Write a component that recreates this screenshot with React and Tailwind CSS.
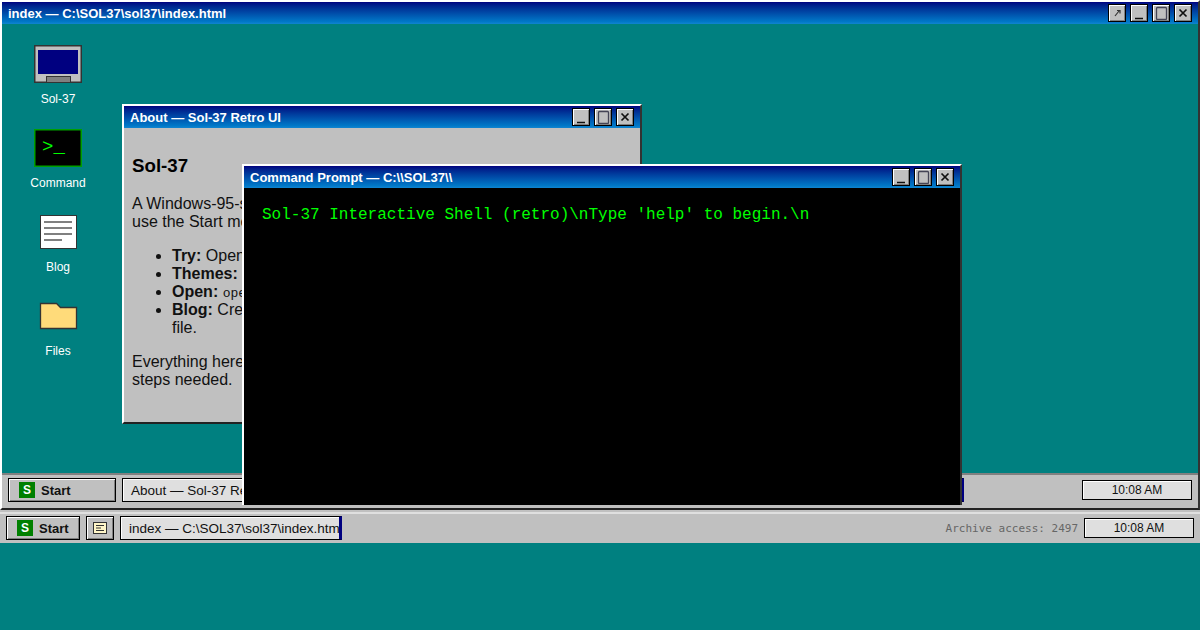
const WinButton = ({ kind }) => (
  <button className="w-[18px] h-[18px] border border-black bg-[#c0c0c0] flex items-center justify-center [box-shadow:inset_1px_1px_0_#fff,inset_-1px_-1px_0_#808080]">
    <svg width="14" height="14" viewBox="0 0 14 14" fill="none">
      {kind === "min" && <path d="M3 12.5h8" stroke="#111" strokeWidth="1.5" />}
      {kind === "max" && <rect x="2.5" y="1.5" width="10" height="12" stroke="#445" strokeWidth="1.3" rx="1" />}
      {kind === "close" && <path d="M3.5 3.5l7 7M10.5 3.5l-7 7" stroke="#111" strokeWidth="1.7" />}
      {kind === "pop" && <path d="M5 10l4-5M7 4.5h3v3" stroke="#333" strokeWidth="1.2" />}
    </svg>
  </button>
);

const TitleBar = ({ title, pop }) => (
  <div className="h-[22px] flex items-center justify-between pl-[6px] pr-[6px] bg-gradient-to-b from-[#000080] to-[#1084d0] shrink-0">
    <span className="text-white font-bold text-[13px] leading-none">{title}</span>
    <div className="flex gap-1">
      {pop && <WinButton kind="pop" />}
      <WinButton kind="min" />
      <WinButton kind="max" />
      <WinButton kind="close" />
    </div>
  </div>
);

const Window = ({ title, className, children }) => (
  <div className={`absolute flex flex-col border-2 border-white border-r-[#333] border-b-[#222] bg-[#c0c0c0] ${className}`}>
    <TitleBar title={title} />
    {children}
  </div>
);

const DesktopIcon = ({ label, children }) => (
  <div className="h-[84px] w-[90px] flex flex-col items-center">
    {children}
    <span className="mt-[3px] text-white text-xs leading-4">{label}</span>
  </div>
);

const StartButton = ({ className }) => (
  <button className={`h-6 flex items-center gap-[6px] pl-[10px] border border-black bg-[#c0c0c0] text-[13px] font-bold text-[#111] [box-shadow:inset_1px_1px_0_#fff,inset_-1px_-1px_0_#808080] ${className}`}>
    <span className="w-4 h-4 bg-[#008000] text-white text-xs flex items-center justify-center">S</span>
    <span className="pt-px">Start</span>
  </button>
);

const TaskItem = ({ children, className }) => (
  <div className={`h-6 flex items-center pl-2 pt-[2px] overflow-hidden whitespace-nowrap bg-[#dfdfdf] border border-black border-r-[3px] border-r-[#000080] text-[13.5px] text-[#111] [box-shadow:inset_1px_1px_0_#fff] ${className}`}>
    {children}
  </div>
);

const Clock = () => (
  <div className="w-[110px] h-5 flex items-center justify-center bg-[#dfdfdf] border border-black text-xs text-[#111] [box-shadow:inset_1px_1px_0_#fff]">
    10:08 AM
  </div>
);

export default function App() {
  return (
    <div className="w-[1200px] h-[630px] overflow-hidden bg-[#008080] font-['Liberation_Sans',Arial,sans-serif] flex flex-col">
      <div className="relative h-[510px] shrink-0 flex flex-col border-2 border-white border-r-[#333] border-b-[#222]">
        <TitleBar title="index — C:\SOL37\sol37\index.html" pop />
        <div className="flex-1 pt-4 pl-[11px]">
          <DesktopIcon label="Sol-37">
            <svg width="48" height="48" viewBox="0 0 48 48">
              <rect x="0.75" y="5.75" width="46.5" height="36.5" fill="#c0c0c0" stroke="#333" strokeWidth="1.5" />
              <rect x="4" y="10" width="40" height="24" fill="#000080" />
              <rect x="12.5" y="36.5" width="24" height="6" fill="#808080" stroke="#333" />
            </svg>
          </DesktopIcon>
          <DesktopIcon label="Command">
            <svg width="48" height="48" viewBox="0 0 48 48">
              <rect x="0.75" y="5.75" width="46.5" height="36.5" fill="#000" stroke="#00a000" strokeWidth="1.5" />
              <text x="8" y="28" fill="#00ff00" fontSize="19" fontFamily="Liberation Mono, monospace">&gt;_</text>
            </svg>
          </DesktopIcon>
          <DesktopIcon label="Blog">
            <svg width="48" height="48" viewBox="0 0 48 48">
              <rect x="6.5" y="7.5" width="36" height="33" fill="#fff" stroke="#333" />
              <path d="M10 14h28M10 20h28M10 26h28M10 32h18" stroke="#808080" strokeWidth="2" />
            </svg>
          </DesktopIcon>
          <DesktopIcon label="Files">
            <svg width="48" height="48" viewBox="0 0 48 48">
              <path d="M6.5 11.5h16l4 4h16v21h-36z" fill="#ffdb7a" stroke="#333" strokeWidth="1.3" />
            </svg>
          </DesktopIcon>
        </div>
        <div className="h-[35px] flex items-center justify-between pl-[6px] pr-[6px] pb-[3px] bg-[#c0c0c0] border-t-2 border-t-[#808080]">
          <div className="flex items-center">
            <StartButton className="w-[108px]" />
            <div className="ml-[6px] flex gap-[2px]">
              <TaskItem className="w-[420px]">About — Sol-37 Retro UI</TaskItem>
              <TaskItem className="w-[420px]">Command Prompt — C:\\SOL37\\</TaskItem>
            </div>
          </div>
          <Clock />
        </div>
        <Window title="About — Sol-37 Retro UI" className="left-[120px] top-[102px] w-[520px] h-[320px]">
          <div className="flex-1 px-2 pt-[26px] text-base leading-[18px] text-[#111]">
            <h2 className="text-[18.72px] font-bold leading-[24px] text-black">Sol-37</h2>
            <p className="mt-[17px]">A Windows-95-style desktop in your browser. Click the icons, or<br />use the Start menu to open windows.</p>
            <ul className="list-disc pl-10 mt-4">
              <li><b>Try:</b> Open the command prompt.</li>
              <li><b>Themes:</b> Change the look.</li>
              <li><b>Open:</b> <code className="font-['Liberation_Mono',monospace] text-[13px] leading-none">open</code> a window by name.</li>
              <li><b>Blog:</b> Create a post from any plain text or markdown<br />file.</li>
            </ul>
            <p className="mt-4">Everything here runs locally in your browser, with no install<br />steps needed.</p>
          </div>
        </Window>
        <Window title="Command Prompt — C:\\SOL37\\" className="left-[240px] top-[162px] w-[720px] h-[341px] border-b-0">
          <div className="flex-1 bg-black px-[18px] pt-[18px] font-['Liberation_Mono',monospace] text-base leading-[18px] text-[#00ff00] whitespace-pre">
            {"Sol-37 Interactive Shell (retro)\\nType 'help' to begin.\\n"}
          </div>
        </Window>
      </div>
      <div className="h-[33px] shrink-0 pt-[2px] bg-[#c0c0c0]">
        <div className="h-full flex items-center justify-between pl-[6px] pr-[6px] pb-[1px] border-t-2 border-t-[#dfdfdf]">
          <div className="flex items-center gap-[6px]">
            <StartButton className="w-[74px]" />
            <button className="w-7 h-6 flex items-center justify-center border border-black bg-[#c0c0c0] [box-shadow:inset_1px_1px_0_#fff,inset_-1px_-1px_0_#808080]">
              <svg width="14" height="12" viewBox="0 0 14 12">
                <rect x="0.5" y="0.5" width="13" height="11" fill="#fff6c8" stroke="#333" />
                <path d="M3 3.5h8M3 6h5M3 8.5h8" stroke="#333" />
              </svg>
            </button>
            <TaskItem className="w-[222px]">index — C:\SOL37\sol37\index.html</TaskItem>
          </div>
          <div className="flex items-center gap-[6px]">
            <span className="pt-[2px] font-['DejaVu_Sans_Mono',monospace] text-[11px] text-[#666]">Archive access: 2497</span>
            <Clock />
          </div>
        </div>
      </div>
    </div>
  );
}
